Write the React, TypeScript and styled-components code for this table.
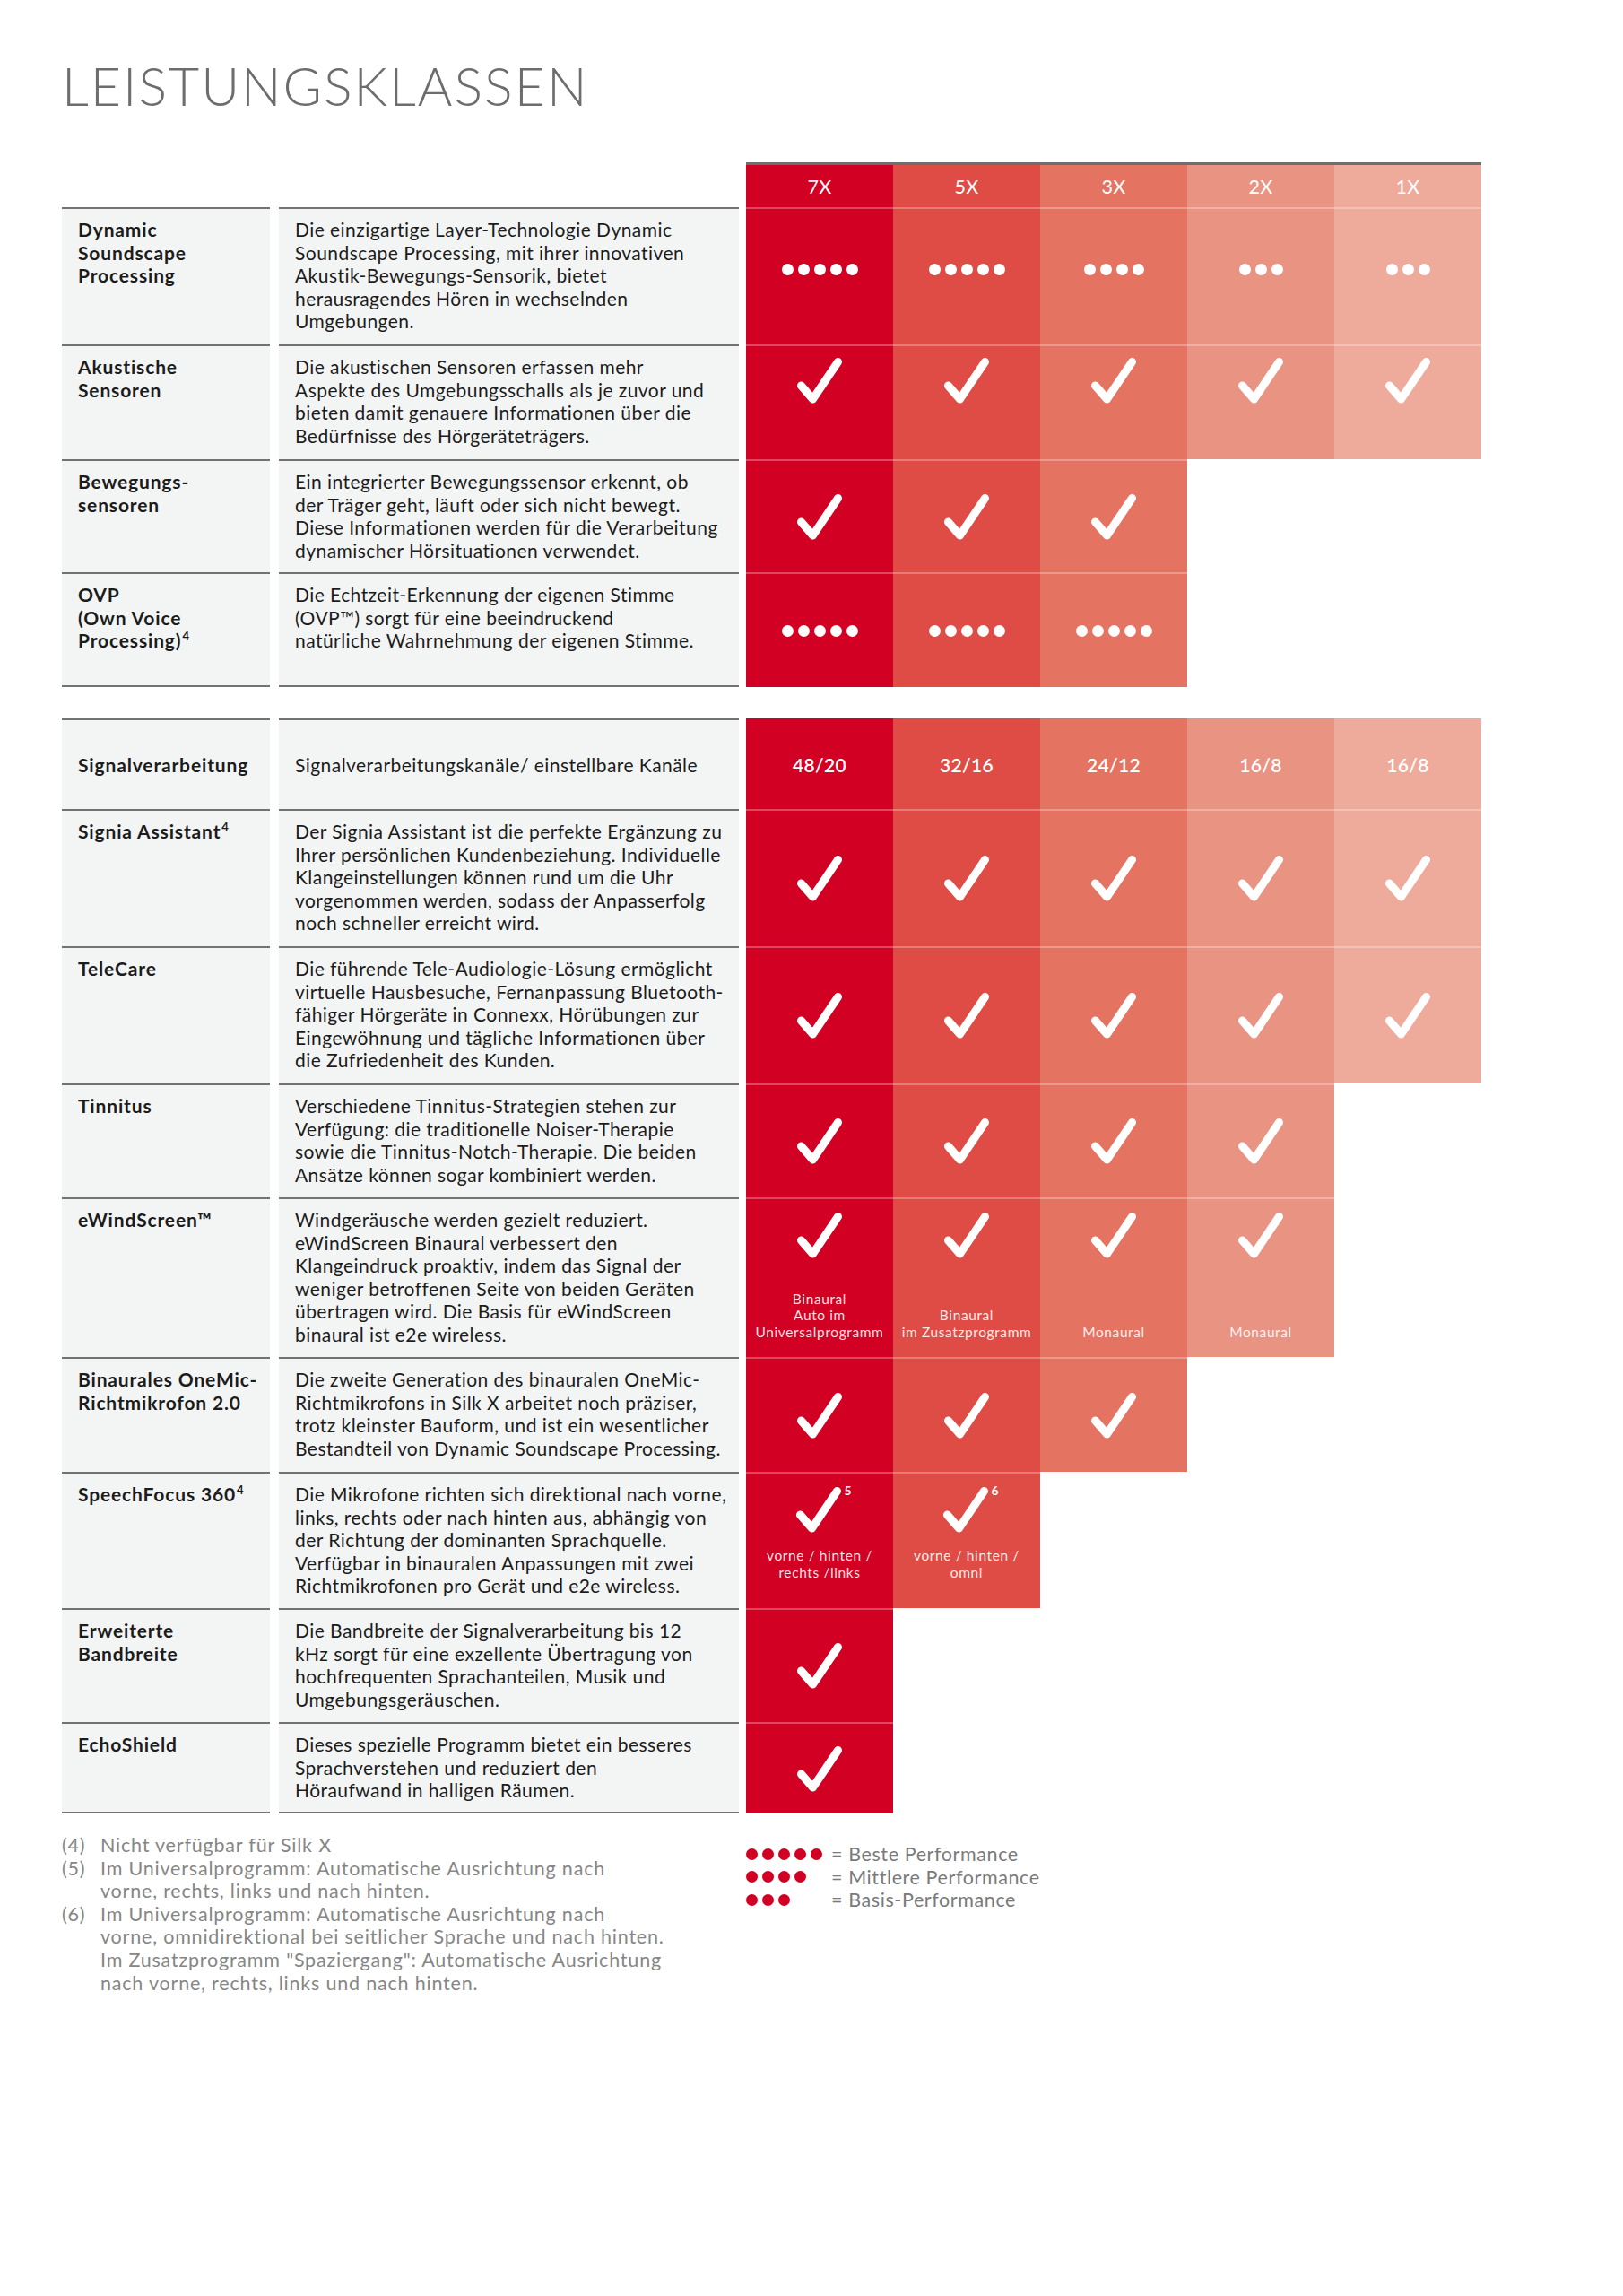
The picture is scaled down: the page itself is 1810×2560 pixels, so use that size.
import React from 'react';
import styled, { createGlobalStyle } from 'styled-components';

const GlobalStyle = createGlobalStyle`
  html, body { margin: 0; padding: 0; background: #ffffff; }
  body {
    font-family: Lato, "Open Sans", "Liberation Sans", sans-serif;
    -webkit-font-smoothing: antialiased;
  }
`;

const TIERS = ['#d20022', '#df4c45', '#e47362', '#e99383', '#eeab9b'];
const HEADS = ['7X', '5X', '3X', '2X', '1X'];

type Mark =
  | { kind: 'dots'; n: number }
  | { kind: 'check'; sup?: string; label?: string[] }
  | { kind: 'value'; text: string };

type Layout = 'center' | 'top' | 'split' | 'stack';

type RowData = {
  label: string[];
  labelSup?: string;
  desc: string[];
  marks: Mark[];
  h: number;
  layout?: Layout;
  markPad?: string;
  centerText?: boolean;
};

const check: Mark = { kind: 'check' };
const checks = (n: number): Mark[] => Array.from({ length: n }, () => check);

const section1: RowData[] = [
  {
    label: ['Dynamic', 'Soundscape', 'Processing'],
    desc: [
      'Die einzigartige Layer-Technologie Dynamic',
      'Soundscape Processing, mit ihrer innovativen',
      'Akustik-Bewegungs-Sensorik, bietet',
      'herausragendes Hören in wechselnden',
      'Umgebungen.',
    ],
    marks: [5, 5, 4, 3, 3].map((n) => ({ kind: 'dots', n } as Mark)),
    markPad: '0 0 16px',
    h: 153,
  },
  {
    label: ['Akustische', 'Sensoren'],
    desc: [
      'Die akustischen Sensoren erfassen mehr',
      'Aspekte des Umgebungsschalls als je zuvor und',
      'bieten damit genauere Informationen über die',
      'Bedürfnisse des Hörgeräteträgers.',
    ],
    marks: checks(5),
    layout: 'top',
    markPad: '13px 0 0',
    h: 128,
  },
  {
    label: ['Bewegungs-', 'sensoren'],
    desc: [
      'Ein integrierter Bewegungssensor erkennt, ob',
      'der Träger geht, läuft oder sich nicht bewegt.',
      'Diese Informationen werden für die Verarbeitung',
      'dynamischer Hörsituationen verwendet.',
    ],
    marks: checks(3),
    h: 126,
  },
  {
    label: ['OVP', '(Own Voice', 'Processing)'],
    labelSup: '4',
    desc: [
      'Die Echtzeit-Erkennung der eigenen Stimme',
      '(OVP™) sorgt für eine beeindruckend',
      'natürliche Wahrnehmung der eigenen Stimme.',
    ],
    marks: [5, 5, 5].map((n) => ({ kind: 'dots', n } as Mark)),
    h: 128,
  },
];

const section2: RowData[] = [
  {
    label: ['Signalverarbeitung'],
    desc: ['Signalverarbeitungskanäle/ einstellbare Kanäle'],
    marks: ['48/20', '32/16', '24/12', '16/8', '16/8'].map((text) => ({ kind: 'value', text } as Mark)),
    centerText: true,
    h: 101,
  },
  {
    label: ['Signia Assistant'],
    labelSup: '4',
    desc: [
      'Der Signia Assistant ist die perfekte Ergänzung zu',
      'Ihrer persönlichen Kundenbeziehung. Individuelle',
      'Klangeinstellungen können rund um die Uhr',
      'vorgenommen werden, sodass der Anpasserfolg',
      'noch schneller erreicht wird.',
    ],
    marks: checks(5),
    h: 153,
  },
  {
    label: ['TeleCare'],
    desc: [
      'Die führende Tele-Audiologie-Lösung ermöglicht',
      'virtuelle Hausbesuche, Fernanpassung Bluetooth-',
      'fähiger Hörgeräte in Connexx, Hörübungen zur',
      'Eingewöhnung und tägliche Informationen über',
      'die Zufriedenheit des Kunden.',
    ],
    marks: checks(5),
    h: 153,
  },
  {
    label: ['Tinnitus'],
    desc: [
      'Verschiedene Tinnitus-Strategien stehen zur',
      'Verfügung: die traditionelle Noiser-Therapie',
      'sowie die Tinnitus-Notch-Therapie. Die beiden',
      'Ansätze können sogar kombiniert werden.',
    ],
    marks: checks(4),
    h: 127,
  },
  {
    label: ['eWindScreen™'],
    desc: [
      'Windgeräusche werden gezielt reduziert.',
      'eWindScreen Binaural verbessert den',
      'Klangeindruck proaktiv, indem das Signal der',
      'weniger betroffenen Seite von beiden Geräten',
      'übertragen wird. Die Basis für eWindScreen',
      'binaural ist e2e wireless.',
    ],
    marks: [
      { kind: 'check', label: ['Binaural', 'Auto im', 'Universalprogramm'] },
      { kind: 'check', label: ['Binaural', 'im Zusatzprogramm'] },
      { kind: 'check', label: ['Monaural'] },
      { kind: 'check', label: ['Monaural'] },
    ],
    layout: 'split',
    markPad: '15px 0 19px',
    h: 178,
  },
  {
    label: ['Binaurales OneMic-', 'Richtmikrofon 2.0'],
    desc: [
      'Die zweite Generation des binauralen OneMic-',
      'Richtmikrofons in Silk X arbeitet noch präziser,',
      'trotz kleinster Bauform, und ist ein wesentlicher',
      'Bestandteil von Dynamic Soundscape Processing.',
    ],
    marks: checks(3),
    h: 128,
  },
  {
    label: ['SpeechFocus 360'],
    labelSup: '4',
    desc: [
      'Die Mikrofone richten sich direktional nach vorne,',
      'links, rechts oder nach hinten aus, abhängig von',
      'der Richtung der dominanten Sprachquelle.',
      'Verfügbar in binauralen Anpassungen mit zwei',
      'Richtmikrofonen pro Gerät und e2e wireless.',
    ],
    marks: [
      { kind: 'check', sup: '5', label: ['vorne / hinten /', 'rechts /links'] },
      { kind: 'check', sup: '6', label: ['vorne / hinten /', 'omni'] },
    ],
    layout: 'stack',
    markPad: '15px 0 0',
    h: 152,
  },
  {
    label: ['Erweiterte', 'Bandbreite'],
    desc: [
      'Die Bandbreite der Signalverarbeitung bis 12',
      'kHz sorgt für eine exzellente Übertragung von',
      'hochfrequenten Sprachanteilen, Musik und',
      'Umgebungsgeräuschen.',
    ],
    marks: checks(1),
    h: 127,
  },
  {
    label: ['EchoShield'],
    desc: [
      'Dieses spezielle Programm bietet ein besseres',
      'Sprachverstehen und reduziert den',
      'Höraufwand in halligen Räumen.',
    ],
    marks: checks(1),
    h: 102,
  },
];

const footnotes: { n: string; lines: string[] }[] = [
  { n: '(4)', lines: ['Nicht verfügbar für Silk X'] },
  {
    n: '(5)',
    lines: ['Im Universalprogramm: Automatische Ausrichtung nach', 'vorne, rechts, links und nach hinten.'],
  },
  {
    n: '(6)',
    lines: [
      'Im Universalprogramm: Automatische Ausrichtung nach',
      'vorne, omnidirektional bei seitlicher Sprache und nach hinten.',
      'Im Zusatzprogramm "Spaziergang": Automatische Ausrichtung',
      'nach vorne, rechts, links und nach hinten.',
    ],
  },
];

const legend = [
  { n: 5, text: '= Beste Performance' },
  { n: 4, text: '= Mittlere Performance' },
  { n: 3, text: '= Basis-Performance' },
];

/* ---------- styled parts ---------- */

const Page = styled.div`
  box-sizing: border-box;
  width: 1810px;
  min-height: 2560px;
  padding: 66px 0 0 69px;
  background: #ffffff;
`;

const Title = styled.h1`
  margin: 0;
  font-family: Lato, "Open Sans", sans-serif;
  font-weight: 300;
  font-size: 59px;
  line-height: 59px;
  letter-spacing: 2px;
  color: #6d6d6d;
`;

const Table = styled.div`
  margin-top: 56px;
  display: flex;
  flex-direction: column;
`;

const HeaderRow = styled.div`
  display: grid;
  grid-template-columns: repeat(5, 164px);
  margin-left: 763px;
`;

const HeadCell = styled.div<{ $tier: number }>`
  box-sizing: border-box;
  height: 50px;
  border-top: 3px solid #6e6e6e;
  background: ${(p) => TIERS[p.$tier]};
  color: #ffffff;
  font-size: 21.5px;
  letter-spacing: 0.4px;
  display: flex;
  align-items: center;
  justify-content: center;
`;

const Section = styled.div<{ $gap?: number }>`
  display: flex;
  flex-direction: column;
  margin-top: ${(p) => p.$gap ?? 0}px;
`;

const Row = styled.div<{ $h: number }>`
  display: flex;
  align-items: stretch;
  height: ${(p) => p.$h}px;
`;

const TextCell = styled.div<{ $last: boolean; $center?: boolean }>`
  box-sizing: border-box;
  min-width: 0;
  background: #f3f4f4;
  border-top: 2px solid #727272;
  border-bottom: ${(p) => (p.$last ? '2px solid #727272' : '0')};
  padding: 10px 18px;
  font-size: 21px;
  line-height: 25.6px;
  color: #1c1c1c;
  display: flex;
  flex-direction: column;
  justify-content: ${(p) => (p.$center ? 'center' : 'flex-start')};
`;

const LabelCell = styled(TextCell)`
  flex: 0 0 232px;
  font-weight: 700;
  letter-spacing: 0.85px;
`;

const DescCell = styled(TextCell)`
  flex: 0 0 513px;
  margin-left: 10px;
  font-weight: 400;
  letter-spacing: 0.45px;
`;

const Line = styled.span`
  display: block;
  white-space: nowrap;
`;

const Sup = styled.sup`
  font-size: 13px;
  line-height: 0;
  vertical-align: 0;
  position: relative;
  top: -8px;
  margin-left: 1px;
`;

const Marks = styled.div`
  flex: 0 0 820px;
  display: grid;
  grid-template-columns: repeat(5, 164px);
  margin-left: 8px;
`;

const MarkCell = styled.div<{ $tier: number; $filled: boolean; $sep: boolean; $layout: Layout; $pad: string }>`
  box-sizing: border-box;
  min-width: 0;
  background: ${(p) => (p.$filled ? TIERS[p.$tier] : 'transparent')};
  border-top: 2px solid ${(p) => (p.$filled && p.$sep ? 'rgba(255,255,255,0.28)' : 'transparent')};
  padding: ${(p) => p.$pad};
  display: flex;
  flex-direction: column;
  align-items: center;
  justify-content: ${(p) =>
    p.$layout === 'center' ? 'center' : p.$layout === 'split' ? 'space-between' : 'flex-start'};
  gap: ${(p) => (p.$layout === 'stack' ? '16px' : '0')};
  color: #ffffff;
`;

const DotRow = styled.div<{ $size: number; $gap: number }>`
  display: flex;
  gap: ${(p) => p.$gap}px;
  & > span {
    width: ${(p) => p.$size}px;
    height: ${(p) => p.$size}px;
    border-radius: 50%;
  }
`;

const Dot = styled.span<{ $color: string }>`
  display: block;
  background: ${(p) => p.$color};
`;

const CheckWrap = styled.div`
  display: flex;
  align-items: flex-start;
  line-height: 0;
`;

const CheckSup = styled.span`
  font-size: 14px;
  font-weight: 700;
  line-height: 14px;
  margin-left: 3px;
  margin-top: -3px;
  margin-right: -10px;
  color: #ffffff;
`;

const MarkLabel = styled.div`
  font-size: 15.5px;
  line-height: 18.5px;
  letter-spacing: 0.6px;
  text-align: center;
  color: rgba(255, 255, 255, 0.9);
  white-space: nowrap;
`;

const Value = styled.div`
  font-size: 21px;
  font-weight: 600;
  letter-spacing: 0.3px;
  color: #ffffff;
`;

const Footer = styled.div`
  display: flex;
  margin-top: 23px;
`;

const Notes = styled.div`
  flex: 0 0 763px;
  display: flex;
  flex-direction: column;
`;

const Note = styled.div`
  display: grid;
  grid-template-columns: 43px auto;
  font-size: 21.5px;
  line-height: 25.6px;
  letter-spacing: 0.8px;
  color: #868686;
`;

const Legend = styled.div`
  margin-top: 9px;
  display: flex;
  flex-direction: column;
`;

const LegendRow = styled.div`
  display: grid;
  grid-template-columns: 95px auto;
  align-items: center;
  height: 25.6px;
`;

const LegendText = styled.span`
  font-size: 21.5px;
  letter-spacing: 0.6px;
  color: #7a7a7a;
  white-space: nowrap;
`;

/* ---------- pieces ---------- */

const CheckIcon: React.FC = () => (
  <svg width="50" height="51" viewBox="0 0 50 51" aria-hidden="true">
    <polyline
      points="4.5,31 17.5,46 45.5,4.5"
      fill="none"
      stroke="#ffffff"
      strokeWidth="9"
      strokeLinecap="round"
      strokeLinejoin="round"
    />
  </svg>
);

const Dots: React.FC<{ n: number; color: string }> = ({ n, color }) => (
  <DotRow $size={13} $gap={5}>
    {Array.from({ length: n }, (_, i) => (
      <Dot key={i} $color={color} />
    ))}
  </DotRow>
);

const MarkContent: React.FC<{ m: Mark }> = ({ m }) => {
  if (m.kind === 'dots') return <Dots n={m.n} color="#ffffff" />;
  if (m.kind === 'value') return <Value>{m.text}</Value>;
  return (
    <>
      <CheckWrap>
        <CheckIcon />
        {m.sup && <CheckSup>{m.sup}</CheckSup>}
      </CheckWrap>
      {m.label && (
        <MarkLabel>
          {m.label.map((l, i) => (
            <Line key={i}>{l}</Line>
          ))}
        </MarkLabel>
      )}
    </>
  );
};

const TableRow: React.FC<{ row: RowData; first: boolean; last: boolean }> = ({ row, first, last }) => {
  const layout: Layout = row.layout ?? 'center';
  return (
    <Row $h={row.h}>
      <LabelCell $last={last} $center={row.centerText}>
        {row.label.map((l, i) => (
          <Line key={i}>
            {l}
            {row.labelSup && i === row.label.length - 1 && <Sup>{row.labelSup}</Sup>}
          </Line>
        ))}
      </LabelCell>
      <DescCell $last={last} $center={row.centerText}>
        {row.desc.map((l, i) => (
          <Line key={i}>{l}</Line>
        ))}
      </DescCell>
      <Marks>
        {HEADS.map((_, i) => {
          const m = row.marks[i];
          return (
            <MarkCell
              key={i}
              $tier={i}
              $filled={!!m}
              $sep={!first}
              $layout={layout}
              $pad={row.markPad ?? '0'}
            >
              {m && <MarkContent m={m} />}
            </MarkCell>
          );
        })}
      </Marks>
    </Row>
  );
};

export default function App() {
  return (
    <>
      <GlobalStyle />
      <Page>
        <Title>LEISTUNGSKLASSEN</Title>
        <Table>
          <HeaderRow>
            {HEADS.map((h, i) => (
              <HeadCell key={h} $tier={i}>
                {h}
              </HeadCell>
            ))}
          </HeaderRow>
          <Section>
            {section1.map((r, i) => (
              <TableRow key={i} row={r} first={false} last={i === section1.length - 1} />
            ))}
          </Section>
          <Section $gap={35}>
            {section2.map((r, i) => (
              <TableRow key={i} row={r} first={i === 0} last={i === section2.length - 1} />
            ))}
          </Section>
        </Table>
        <Footer>
          <Notes>
            {footnotes.map((f) => (
              <Note key={f.n}>
                <span>{f.n}</span>
                <span>
                  {f.lines.map((l, i) => (
                    <Line key={i}>{l}</Line>
                  ))}
                </span>
              </Note>
            ))}
          </Notes>
          <Legend>
            {legend.map((l) => (
              <LegendRow key={l.n}>
                <Dots n={l.n} color="#d20022" />
                <LegendText>{l.text}</LegendText>
              </LegendRow>
            ))}
          </Legend>
        </Footer>
      </Page>
    </>
  );
}
